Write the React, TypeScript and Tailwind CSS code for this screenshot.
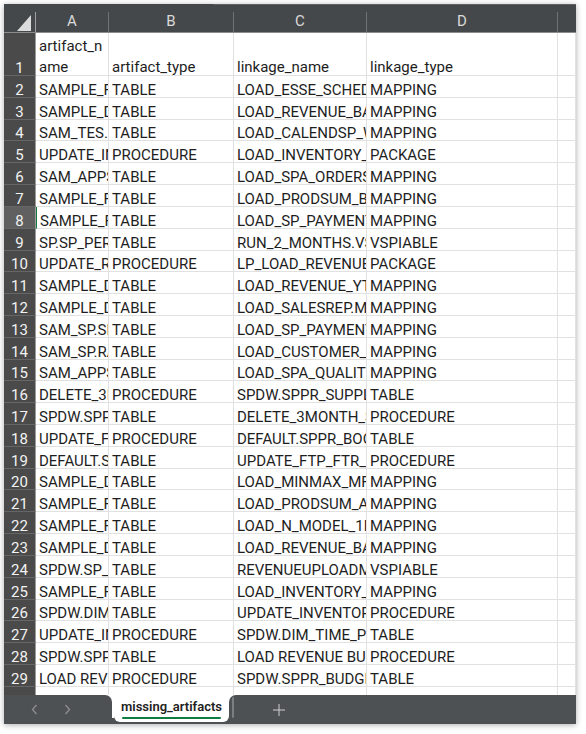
import React from "react";

const data: [string, string, string, string][] = [
  ["SAMPLE_FACT_ORD", "TABLE", "LOAD_ESSE_SCHEDULE", "MAPPING"],
  ["SAMPLE_DIM_CUST", "TABLE", "LOAD_REVENUE_BASE", "MAPPING"],
  ["SAM_TES.TBL_SALES", "TABLE", "LOAD_CALENDSP_WEEK", "MAPPING"],
  ["UPDATE_INVENTORY", "PROCEDURE", "LOAD_INVENTORY_AGG", "PACKAGE"],
  ["SAM_APPS.ORDERS", "TABLE", "LOAD_SPA_ORDERS_DLY", "MAPPING"],
  ["SAMPLE_FACT_PROD", "TABLE", "LOAD_PRODSUM_BASE", "MAPPING"],
  ["SAMPLE_FACT_PAY", "TABLE", "LOAD_SP_PAYMENT_DLY", "MAPPING"],
  ["SP.SP_PERIOD", "TABLE", "RUN_2_MONTHS.VSP", "VSPIABLE"],
  ["UPDATE_REVENUE", "PROCEDURE", "LP_LOAD_REVENUE_PKG", "PACKAGE"],
  ["SAMPLE_DIM_REV", "TABLE", "LOAD_REVENUE_YTD", "MAPPING"],
  ["SAMPLE_DIM_REP", "TABLE", "LOAD_SALESREP.MAP", "MAPPING"],
  ["SAM_SP.SP_PAY", "TABLE", "LOAD_SP_PAYMENT_WK", "MAPPING"],
  ["SAM_SP.RATES", "TABLE", "LOAD_CUSTOMER_TYPE", "MAPPING"],
  ["SAM_APPS.QUAL", "TABLE", "LOAD_SPA_QUALITY", "MAPPING"],
  ["DELETE_3MONTH", "PROCEDURE", "SPDW.SPPR_SUPPLY", "TABLE"],
  ["SPDW.SPPR_DEL", "TABLE", "DELETE_3MONTH_SUPP", "PROCEDURE"],
  ["UPDATE_FTP_FTR", "PROCEDURE", "DEFAULT.SPPR_BOOK", "TABLE"],
  ["DEFAULT.SPPR", "TABLE", "UPDATE_FTP_FTR_BOOK", "PROCEDURE"],
  ["SAMPLE_DIM_MFG", "TABLE", "LOAD_MINMAX_MFG", "MAPPING"],
  ["SAMPLE_FACT_AVG", "TABLE", "LOAD_PRODSUM_AVG", "MAPPING"],
  ["SAMPLE_FACT_MDL", "TABLE", "LOAD_N_MODEL_1M", "MAPPING"],
  ["SAMPLE_DIM_BASE", "TABLE", "LOAD_REVENUE_BASE", "MAPPING"],
  ["SPDW.SP_CUST", "TABLE", "REVENUEUPLOADMAP", "VSPIABLE"],
  ["SAMPLE_FACT_INV", "TABLE", "LOAD_INVENTORY_EOM", "MAPPING"],
  ["SPDW.DIM_TIME", "TABLE", "UPDATE_INVENTORY_X", "PROCEDURE"],
  ["UPDATE_INV_PROC", "PROCEDURE", "SPDW.DIM_TIME_PERIOD", "TABLE"],
  ["SPDW.SPPR_BUD", "TABLE", "LOAD REVENUE BUDGET", "PROCEDURE"],
  ["LOAD REVENUE", "PROCEDURE", "SPDW.SPPR_BUDGET", "TABLE"],
];

const colW = ["w-[73px]", "w-[125px]", "w-[133px]", "w-[191px]", "flex-1"];
const letters = ["A", "B", "C", "D", ""];

const font = { fontFamily: "Roboto, 'Liberation Sans', sans-serif" };

function HeaderRow() {
  return (
    <div className="flex flex-col bg-[#45484a]">
      <div className="flex h-px">
        <div className="w-[209px]" />
        <div className="flex-1 bg-[#5f6264] rounded-tl-[2px]" />
      </div>
      <div className="flex h-[28px] border-b border-[#8c8c8c]">
        <div className="flex w-[32px] shrink-0">
          <div className="flex flex-1 items-end justify-end pb-[1px] pr-[3px]">
            <svg width="15" height="16" viewBox="0 0 15 16">
              <polygon points="14,0 14,16 0,16" fill="#dcdcdc" />
            </svg>
          </div>
          <div className="w-px self-end h-[20px] bg-[#a0a0a0]" />
        </div>
        {letters.map((l, i) => (
          <div key={i} className={`flex ${colW[i]} shrink-0`}>
            <div className="flex flex-1 items-end justify-center pb-[2px] text-[15px] leading-[18px] text-[#dadada]">
              {l}
            </div>
            {i < 4 && <div className="w-px self-end h-[20px] bg-[#707375]" />}
          </div>
        ))}
      </div>
    </div>
  );
}

function RowHeader({ n, h, active }: { n: number; h: string; active?: boolean }) {
  return (
    <div
      className={`flex w-[32px] shrink-0 ${h} items-end justify-center border-r border-b border-r-[#9c9c9c] border-b-[#666666] ${
        active ? "bg-[#606060]" : "bg-[#4a4a4a]"
      } text-[15px] leading-[14px] text-[#f2f2f2]`}
    >
      {n}
    </div>
  );
}

function Cell({ text, w, h, green }: { text: string; w: string; h: string; green?: boolean }) {
  return (
    <div
      className={`flex ${w} shrink-0 ${h} items-end overflow-hidden whitespace-nowrap border-r border-b border-[#e1e1e1] pl-[3px] text-[15px] leading-[14px] text-[#1e1e1e] ${
        green ? "border-l border-l-[#107c41] pl-[2px]" : ""
      }`}
    >
      <span>{text}</span>
    </div>
  );
}

export default function App() {
  return (
    <div className="min-h-screen bg-white p-[4px]" style={font}>
      <div className="flex h-[720px] w-[572px] flex-col overflow-hidden bg-white shadow-[0_1px_6px_rgba(0,0,0,0.32)]">
        <HeaderRow />
        <div className="flex flex-1 flex-col overflow-hidden">
          {/* row 1 */}
          <div className="flex h-[43px] shrink-0">
            <RowHeader n={1} h="h-[43px]" />
            <div className="flex w-[73px] shrink-0 h-[43px] items-end overflow-hidden border-r border-b border-[#e1e1e1] pl-[3px] text-[15px] leading-[21.7px] text-[#1e1e1e]">
              <div className="flex flex-col translate-y-[4px]">
                <span>artifact_n</span>
                <span>ame</span>
              </div>
            </div>
            {["artifact_type", "linkage_name", "linkage_type", ""].map((t, i) => (
              <div
                key={i}
                className={`flex ${colW[i + 1]} shrink-0 h-[43px] items-end overflow-hidden whitespace-nowrap border-r border-b border-[#e1e1e1] pl-[3px] text-[15px] leading-[21.7px] text-[#1e1e1e]`}
              >
                <span className="translate-y-[4px]">{t}</span>
              </div>
            ))}
          </div>
          {data.map((r, idx) => (
            <div key={idx} className="flex h-[21.82px] shrink-0">
              <RowHeader n={idx + 2} h="h-[21.82px]" active={idx + 2 === 8} />
              {r.map((t, i) => (
                <Cell key={i} text={t} w={colW[i]} h="h-[21.82px]" green={idx + 2 === 8 && i === 0} />
              ))}
              <Cell text="" w={colW[4]} h="h-[21.82px]" />
            </div>
          ))}
          <div className="flex h-[21.82px] shrink-0">
            <div className="w-[32px] shrink-0 h-[21.82px] bg-[#4a4a4a] border-r border-r-[#9c9c9c]" />
            {colW.map((w, i) => (
              <Cell key={i} text="" w={w} h="h-[21.82px]" />
            ))}
          </div>
        </div>
        {/* tab bar */}
        <div className="flex h-[29px] shrink-0 bg-white">
          <div className="flex w-[108px] shrink-0 items-center gap-[26px] rounded-tr-[7px] bg-[#4e5153] pl-[27px]">
            <svg width="7" height="11" viewBox="0 0 7 11">
              <polyline points="5.5,1 1.5,5.5 5.5,10" fill="none" stroke="#8e8e8e" strokeWidth="1.3" />
            </svg>
            <svg width="7" height="11" viewBox="0 0 7 11">
              <polyline points="1.5,1 5.5,5.5 1.5,10" fill="none" stroke="#8e8e8e" strokeWidth="1.3" />
            </svg>
          </div>
          <div className="flex w-[2px] shrink-0 flex-col justify-end">
            <div className="h-[6px] bg-[#4e5153]" />
          </div>
          <div className="flex w-[115px] shrink-0 flex-col bg-[#4e5153]">
            <div className="flex h-[27px] flex-col items-center justify-end rounded-b-[6px] bg-white pb-[3px]">
              <span className="text-[13px] font-semibold leading-[16px] text-[#222222]">missing_artifacts</span>
              <div className="mt-[2px] h-[2px] w-[99px] rounded-full bg-[#107c41]" />
            </div>
          </div>
          <div className="flex flex-1 items-center rounded-tl-[7px] bg-[#4e5153]">
            <div className="ml-[3px] h-[21px] w-[2px] self-start mt-[2px] rounded-full bg-[#7c7f81]" />
            <div className="ml-[39px] flex">
              <svg width="12" height="12" viewBox="0 0 12 12">
                <line x1="6" y1="0" x2="6" y2="12" stroke="#cfcfcf" strokeWidth="1" />
                <line x1="0" y1="6" x2="12" y2="6" stroke="#cfcfcf" strokeWidth="1" />
              </svg>
            </div>
          </div>
        </div>
      </div>
    </div>
  );
}
